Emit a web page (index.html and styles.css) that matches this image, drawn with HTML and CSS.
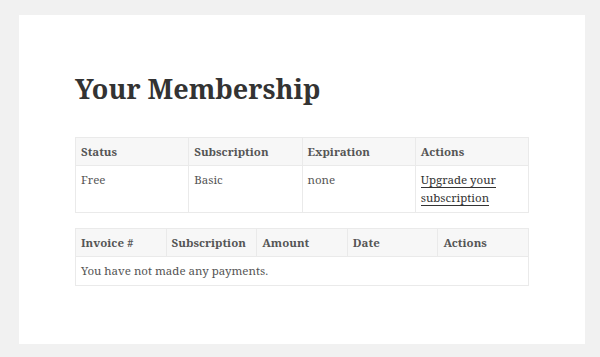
FILE: index.html
```html
<!DOCTYPE html>
<html lang="en">
<head>
    <meta charset="UTF-8">
    <title>Your Membership</title>
    <link rel="stylesheet" href="styles.css">
</head>
<body>
    <div class="card">
        <h1>Your Membership</h1>

        <table class="grid cols-4">
            <thead>
                <tr>
                    <th>Status</th>
                    <th>Subscription</th>
                    <th>Expiration</th>
                    <th>Actions</th>
                </tr>
            </thead>
            <tbody>
                <tr>
                    <td>Free</td>
                    <td>Basic</td>
                    <td>none</td>
                    <td><a href="#">Upgrade your subscription</a></td>
                </tr>
            </tbody>
        </table>

        <table class="grid cols-5">
            <thead>
                <tr>
                    <th>Invoice #</th>
                    <th>Subscription</th>
                    <th>Amount</th>
                    <th>Date</th>
                    <th>Actions</th>
                </tr>
            </thead>
            <tbody>
                <tr>
                    <td colspan="5">You have not made any payments.</td>
                </tr>
            </tbody>
        </table>
    </div>
</body>
</html>
```

FILE: styles.css
```css
body {
    margin: 0;
    padding: 15px 15px 14px 19px;
    background-color: #f1f1f1;
    font-family: "Noto Serif", "DejaVu Serif", "Liberation Serif", serif;
    color: #333;
}
.card {
    width: 454px;
    background-color: white;
    padding: 56px 56px 58px;
}
h1 {
    margin: 0 0 30px;
    font-size: 27px;
    line-height: 36px;
    font-weight: bold;
    color: #333;
}
.grid {
    width: 100%;
    table-layout: fixed;
    border-collapse: collapse;
    border: 1px solid #eaeaea;
    font-size: 11.5px;
    line-height: 18px;
}
.grid + .grid {
    margin-top: 15px;
}
.grid th,
.grid td {
    border: 1px solid #eaeaea;
    padding: 5px 5px 4px;
    text-align: left;
    vertical-align: top;
}
.grid th {
    background-color: #f7f7f7;
    font-weight: bold;
    color: #555;
}
.grid td {
    color: #555;
    padding-bottom: 5px;
}
.grid a {
    color: #333;
    text-decoration: none;
    border-bottom: 1px solid #333;
}
```
